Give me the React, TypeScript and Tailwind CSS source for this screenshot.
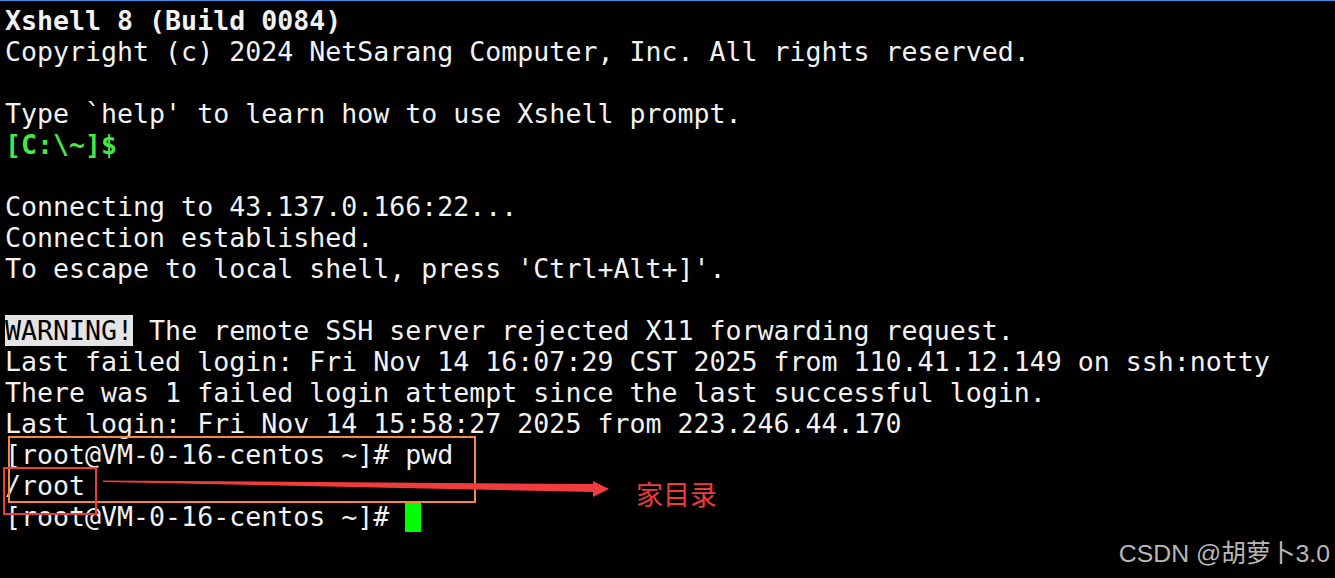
import * as React from "react";

const lines: React.ReactNode[] = [
  <span className="font-bold">Xshell 8 (Build 0084)</span>,
  "Copyright (c) 2024 NetSarang Computer, Inc. All rights reserved.",
  "",
  "Type `help' to learn how to use Xshell prompt.",
  <span className="font-bold text-[#45e845]">{"[C:\\~]$"}</span>,
  "",
  "Connecting to 43.137.0.166:22...",
  "Connection established.",
  "To escape to local shell, press 'Ctrl+Alt+]'.",
  "",
  <>
    <span className="bg-[#e4e4e4] text-black">WARNING!</span> The remote SSH
    server rejected X11 forwarding request.
  </>,
  "Last failed login: Fri Nov 14 16:07:29 CST 2025 from 110.41.12.149 on ssh:notty",
  "There was 1 failed login attempt since the last successful login.",
  "Last login: Fri Nov 14 15:58:27 2025 from 223.246.44.170",
  "[root@VM-0-16-centos ~]# pwd",
  "/root",
  <>
    {"[root@VM-0-16-centos ~]# "}
    <span className="inline-block w-[16px] h-[31px] align-top bg-[#00ff00]" />
  </>,
];

export default function App() {
  return (
    <div className="relative h-[578px] w-full overflow-hidden bg-black border-t border-[#3a8ee6]">
      <div className="flex flex-col pl-[5px] pt-[4px] font-['DejaVu_Sans_Mono',monospace] text-[26.6px] leading-[31px] text-[#f2f2f2]">
        {lines.map((line, i) => (
          <div key={i} className="h-[31px] whitespace-pre">
            {line}
          </div>
        ))}
      </div>

      {/* annotations drawn over the terminal */}
      <div className="absolute left-[8px] top-[435px] w-[468px] h-[67px] border-[2.5px] border-[#f58a3c]" />
      <div className="absolute left-[3px] top-[466px] w-[94px] h-[48px] border-2 border-[#ec3d3d]" />
      <svg
        className="absolute left-0 top-0"
        width="620"
        height="520"
        viewBox="0 0 620 520"
      >
        <polygon
          points="103,479.5 593,483 593,480 609,488 593,496 593,491 103,481"
          fill="#f03c3c"
        />
      </svg>
      <div className="absolute left-[636px] top-[475px] font-['Noto_Sans_CJK_SC',sans-serif] text-[27px] leading-[36px] text-[#ee3b3b]">
        家目录
      </div>
      <div className="absolute right-[5px] top-[537px] font-['Liberation_Sans','Noto_Sans_CJK_SC',sans-serif] text-[24.8px] leading-[32px] text-[#b8b8b8]">
        CSDN @胡萝卜3.0
      </div>
    </div>
  );
}
